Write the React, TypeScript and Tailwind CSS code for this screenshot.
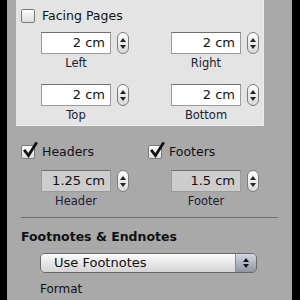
import React from "react";

const font = { fontFamily: '"DejaVu Sans", "Liberation Sans", sans-serif' };

function Stepper() {
  return (
    <div className="w-[12px] h-[22px] rounded-[6px] border border-[#7d7d7d] bg-gradient-to-b from-[#ffffff] to-[#d8d8d8] flex flex-col items-center justify-center gap-[3px]">
      <svg width="6" height="4" viewBox="0 0 6 4"><path d="M3 0 L6 4 L0 4 Z" fill="#222" /></svg>
      <svg width="6" height="4" viewBox="0 0 6 4"><path d="M0 0 L6 0 L3 4 Z" fill="#222" /></svg>
    </div>
  );
}

function Field({ value, label, disabled }: { value: string; label: string; disabled?: boolean }) {
  return (
    <div className="flex flex-col items-start">
      <div className="flex items-start gap-[6px]">
        <div
          className={
            "w-[70px] h-[22px] flex items-center justify-end pr-[5px] text-[13px] text-[#111] border border-[#9b9b9b] border-t-[#6f6f6f] " +
            (disabled ? "bg-[#cdcdcd]" : "bg-white")
          }
        >
          {value}
        </div>
        <Stepper />
      </div>
      <div className="w-[70px] text-center text-[11.5px] leading-[14px] mt-[2px] text-[#202030]">{label}</div>
    </div>
  );
}

function Check({ checked }: { checked?: boolean }) {
  return (
    <div className="relative w-[14px] h-[14px] rounded-[2px] border border-[#7a7a7a] bg-gradient-to-b from-[#fdfdfd] to-[#dedede]">
      {checked && (
        <svg className="absolute left-[1px] top-[-4px]" width="15" height="16" viewBox="0 0 15 16">
          <path d="M2 9 L5.5 13.5 L13 1.5" stroke="#111" strokeWidth="2.8" fill="none" strokeLinecap="square" />
        </svg>
      )}
    </div>
  );
}

export default function App() {
  return (
    <div className="w-[300px] h-[300px] flex bg-black overflow-hidden" style={font}>
      <div className="w-[7px]" />
      <div className="w-[285px] h-full bg-[#a9a9a9] flex flex-col">
        <div className="ml-[9px] w-[248px] h-[126px] bg-[#e4e4e4] border-r border-b border-[#ececec] pl-[5px] pt-[9px]">
          <div className="flex items-center gap-[7px] h-[14px]">
            <Check />
            <span className="text-[12.5px] text-[#111]">Facing Pages</span>
          </div>
          <div className="ml-[20px] mt-[9px] grid grid-cols-[88px_88px] gap-x-[42px] gap-y-[14px]">
            <Field value="2 cm" label="Left" />
            <Field value="2 cm" label="Right" />
            <Field value="2 cm" label="Top" />
            <Field value="2 cm" label="Bottom" />
          </div>
        </div>
        <div className="pl-[14px] pt-[19px]">
          <div className="grid grid-cols-[127px_130px]">
            <div className="flex flex-col">
              <div className="flex items-center gap-[7px] h-[14px]">
                <Check checked />
                <span className="text-[12.5px] text-[#111]">Headers</span>
              </div>
              <div className="ml-[20px] mt-[11px]">
                <Field value="1.25 cm" label="Header" disabled />
              </div>
            </div>
            <div className="flex flex-col">
              <div className="flex items-center gap-[7px] h-[14px]">
                <Check checked />
                <span className="text-[12.5px] text-[#111]">Footers</span>
              </div>
              <div className="ml-[23px] mt-[11px]">
                <Field value="1.5 cm" label="Footer" disabled />
              </div>
            </div>
          </div>
          <div className="mt-[9px] w-[257px] h-px bg-[#6e6e6e]" />
          <div className="mt-[11px] text-[12.5px] font-bold text-[#111] leading-[15px]">Footnotes &amp; Endnotes</div>
          <div className="ml-[19px] mt-[9px] w-[217px] h-[20px] rounded-[5px] border border-[#6a6a6a] flex overflow-hidden">
            <div className="flex-1 bg-gradient-to-b from-[#fbfbfb] to-[#d4d4d4] flex items-center pl-[13px] text-[13px] text-[#111]">
              Use Footnotes
            </div>
            <div className="w-[21px] bg-gradient-to-b from-[#d4d8e2] to-[#8e95a6] flex flex-col items-center justify-center gap-[2px] border-l border-[#8a8a8a]">
              <svg width="6" height="4" viewBox="0 0 6 4"><path d="M3 0 L6 4 L0 4 Z" fill="#111" /></svg>
              <svg width="6" height="4" viewBox="0 0 6 4"><path d="M0 0 L6 0 L3 4 Z" fill="#111" /></svg>
            </div>
          </div>
          <div className="ml-[19px] mt-[7px] text-[12px] text-[#111]">Format</div>
        </div>
      </div>
      <div className="w-[8px]" />
    </div>
  );
}
